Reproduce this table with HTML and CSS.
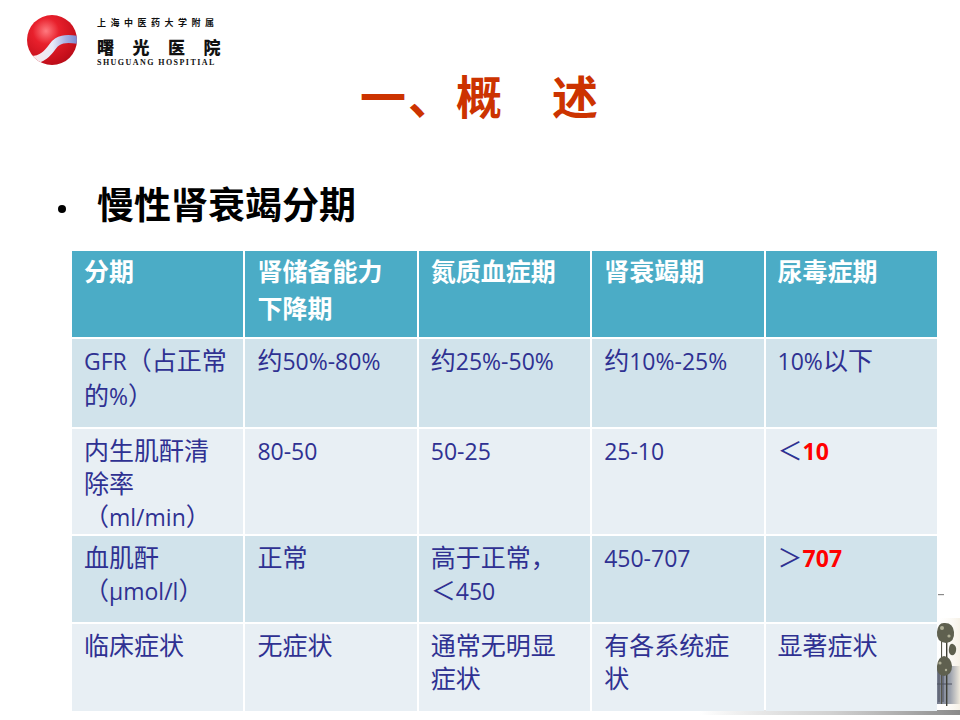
FILE: index.html
```html
<!DOCTYPE html>
<html lang="zh-CN">
<head>
<meta charset="utf-8">
<title>一、概述</title>
<link rel="stylesheet" href="styles.css">
</head>
<body>
<div class="slide">
  <header class="brand">
    <svg class="logo-mark" width="50" height="50" viewBox="0 0 50 50">
      <defs>
        <radialGradient id="ball" cx="0.38" cy="0.32" r="0.75">
          <stop offset="0" stop-color="#ff7a80"/>
          <stop offset="0.35" stop-color="#e8202c"/>
          <stop offset="0.8" stop-color="#c8101c"/>
          <stop offset="1" stop-color="#b50c18"/>
        </radialGradient>
        <linearGradient id="band" gradientUnits="userSpaceOnUse" x1="6" y1="0" x2="50" y2="0">
          <stop offset="0" stop-color="#ffffff" stop-opacity="0.9"/>
          <stop offset="0.45" stop-color="#e6e9f8"/>
          <stop offset="0.75" stop-color="#a6afe2"/>
          <stop offset="1" stop-color="#7d89d0"/>
        </linearGradient>
        <clipPath id="ballclip"><circle cx="25" cy="25" r="25"/></clipPath>
      </defs>
      <circle cx="25" cy="25" r="25" fill="url(#ball)"/>
      <g clip-path="url(#ballclip)">
        <path d="M4 45 C15 45 21 38 26 31 S38 23 52 25" fill="none" stroke="url(#band)" stroke-width="8" stroke-linecap="round"/>
      </g>
    </svg>
    <div class="brand-text">
      <div class="brand-top">上海中医药大学附属</div>
      <div class="brand-name">曙光医院</div>
      <div class="brand-en">SHUGUANG HOSPITIAL</div>
    </div>
  </header>

  <h1 class="title">一、概　述</h1>

  <ul class="points">
    <li><span class="dot"></span>慢性肾衰竭分期</li>
  </ul>

  <table class="stages">
    <tr class="row-head">
      <th>分期</th>
      <th>肾储备能力<br>下降期</th>
      <th>氮质血症期</th>
      <th>肾衰竭期</th>
      <th>尿毒症期</th>
    </tr>
    <tr class="band1 row-a">
      <td><span class="en">GFR</span>（占正常<br>的<span class="en">%</span>）</td>
      <td>约<span class="en">50%-80%</span></td>
      <td>约<span class="en">25%-50%</span></td>
      <td>约<span class="en">10%-25%</span></td>
      <td><span class="en">10%</span>以下</td>
    </tr>
    <tr class="band2 row-b">
      <td>内生肌酐清<br>除率<br>（<span class="en">ml/min</span>）</td>
      <td><span class="en">80-50</span></td>
      <td><span class="en">50-25</span></td>
      <td><span class="en">25-10</span></td>
      <td>＜<span class="en red">10</span></td>
    </tr>
    <tr class="band1 row-c">
      <td>血肌酐<br>（<span class="en">µmol/l</span>）</td>
      <td>正常</td>
      <td>高于正常，<br>＜<span class="en">450</span></td>
      <td><span class="en">450-707</span></td>
      <td>＞<span class="en red">707</span></td>
    </tr>
    <tr class="band2 row-d">
      <td>临床症状</td>
      <td>无症状</td>
      <td>通常无明显<br>症状</td>
      <td>有各系统症<br>状</td>
      <td>显著症状</td>
    </tr>
  </table>

  <div class="photo" aria-hidden="true">
    <svg width="280" height="140" viewBox="0 0 280 140">
      <defs>
        <linearGradient id="ground" x1="0" y1="0" x2="1" y2="0">
          <stop offset="0" stop-color="#b8b8b8" stop-opacity="0"/>
          <stop offset="0.5" stop-color="#c6c6c6" stop-opacity="0.8"/>
          <stop offset="1" stop-color="#8a8a8a"/>
        </linearGradient>
        <linearGradient id="bldg" x1="0" y1="0" x2="1" y2="0">
          <stop offset="0" stop-color="#6f7688"/>
          <stop offset="0.6" stop-color="#9aa0ac"/>
          <stop offset="1" stop-color="#efe9dc"/>
        </linearGradient>
        <linearGradient id="haze" x1="0" y1="0" x2="1" y2="0">
          <stop offset="0" stop-color="#ffffff" stop-opacity="0"/>
          <stop offset="1" stop-color="#f6f1e6"/>
        </linearGradient>
        <filter id="soft" x="-20%" y="-20%" width="140%" height="140%">
          <feGaussianBlur stdDeviation="0.7"/>
        </filter>
      </defs>
      <rect x="255" y="38" width="25" height="92" fill="url(#haze)"/>
      <g filter="url(#soft)">
        <rect x="255" y="86" width="25" height="38" fill="url(#bldg)"/>
        <g stroke="#4f5260" stroke-width="1">
          <line x1="259" y1="88" x2="259" y2="122"/>
          <line x1="263" y1="88" x2="263" y2="122"/>
          <line x1="255" y1="104" x2="272" y2="104"/>
        </g>
        <rect x="266" y="48" width="1.4" height="78" fill="#3d3c34"/>
        <rect x="261" y="60" width="1.1" height="64" fill="#55544a"/>
        <g fill="#5f6150">
          <path d="M257 52 Q258 42 265 43 Q273 43 274 52 Q275 62 266 63 Q256 62 257 52 Z"/>
          <path d="M257 86 Q258 77 264 76 Q271 77 272 86 Q272 95 264 96 Q256 95 257 86 Z"/>
          <path d="M269 68 Q270 63 273 64 Q277 66 276 71 Q275 76 271 75 Q268 73 269 68 Z"/>
        </g>
        <g fill="#b0af96">
          <circle cx="262" cy="48" r="2"/>
          <circle cx="269" cy="56" r="1.6"/>
          <circle cx="260" cy="83" r="1.6"/>
          <circle cx="266" cy="90" r="1.2"/>
        </g>
      </g>
      <rect x="20" y="130" width="260" height="5" fill="url(#ground)"/>
      <rect x="258" y="14" width="6" height="1.2" fill="#8a8a8a"/>
    </svg>
  </div>
</div>
</body>
</html>
```

FILE: styles.css
```css
body {
  margin: 0;
  background: #ffffff;
}

.slide {
  position: relative;
  width: 960px;
  height: 720px;
  overflow: hidden;
  background: #ffffff;
  font-family: "Noto Sans CJK SC", sans-serif;
}

/* ---------- brand ---------- */
.brand {
  display: flex;
  align-items: flex-start;
  gap: 20px;
  padding: 15px 0 0 27px;
  height: 51px;
}

.logo-mark {
  flex: none;
  display: block;
}

.brand-text {
  margin-top: 3px;
  color: #111111;
}

.brand-top {
  font-size: 9px;
  line-height: 10px;
  font-weight: 700;
  letter-spacing: 4.5px;
  white-space: nowrap;
}

.brand-name {
  margin-top: 10px;
  font-size: 17px;
  line-height: 17px;
  font-weight: 900;
  letter-spacing: 18.5px;
  white-space: nowrap;
}

.brand-en {
  margin-top: 4px;
  font-family: "Liberation Serif", serif;
  font-size: 8px;
  line-height: 8px;
  font-weight: 700;
  letter-spacing: 1.45px;
  white-space: nowrap;
}

/* ---------- title ---------- */
.title {
  margin: 0;
  text-align: center;
  font-size: 46px;
  line-height: 56px;
  font-weight: 700;
  letter-spacing: 2px;
  color: #cc3300;
}

/* ---------- bullet ---------- */
.points {
  list-style: none;
  margin: 59px 0 0;
  padding: 0 0 0 58px;
}

.points li {
  display: flex;
  align-items: flex-start;
  font-size: 37px;
  line-height: 44px;
  font-weight: 700;
  color: #000000;
}

.dot {
  flex: none;
  width: 8px;
  height: 8px;
  border-radius: 50%;
  background: #000000;
  margin: 24px 31px 0 0;
}

/* ---------- table ---------- */
.stages {
  position: relative;
  z-index: 1;
  margin: 24px 0 0 70px;
  width: 869px;
  table-layout: fixed;
  border-collapse: separate;
  border-spacing: 2px;
}

.stages th {
  text-align: left;
  vertical-align: top;
  padding: 1px 12px 0;
  font-size: 25px;
  line-height: 37px;
  font-weight: 700;
  color: #ffffff;
  background: #4bacc6;
}

.stages td {
  text-align: left;
  vertical-align: top;
  padding: 4px 12px 0;
  font-size: 25px;
  line-height: 33px;
  font-weight: 400;
  color: #2f3192;
}

.band1 td {
  background: #d1e3eb;
}

.band2 td {
  background: #e8eff4;
}

.row-head { height: 86px; }
.row-a { height: 88px; }
.row-b { height: 103px; }
.row-c { height: 86px; }
.row-d { height: 87px; }

.en {
  font-family: "Open Sans", sans-serif;
  font-size: 23px;
}

.red {
  color: #ff0000;
  font-weight: 700;
}

/* ---------- background photo (bottom right) ---------- */
.photo {
  position: absolute;
  right: 0;
  bottom: 0;
  width: 280px;
  height: 140px;
  z-index: 0;
}

.photo svg {
  display: block;
}
```
